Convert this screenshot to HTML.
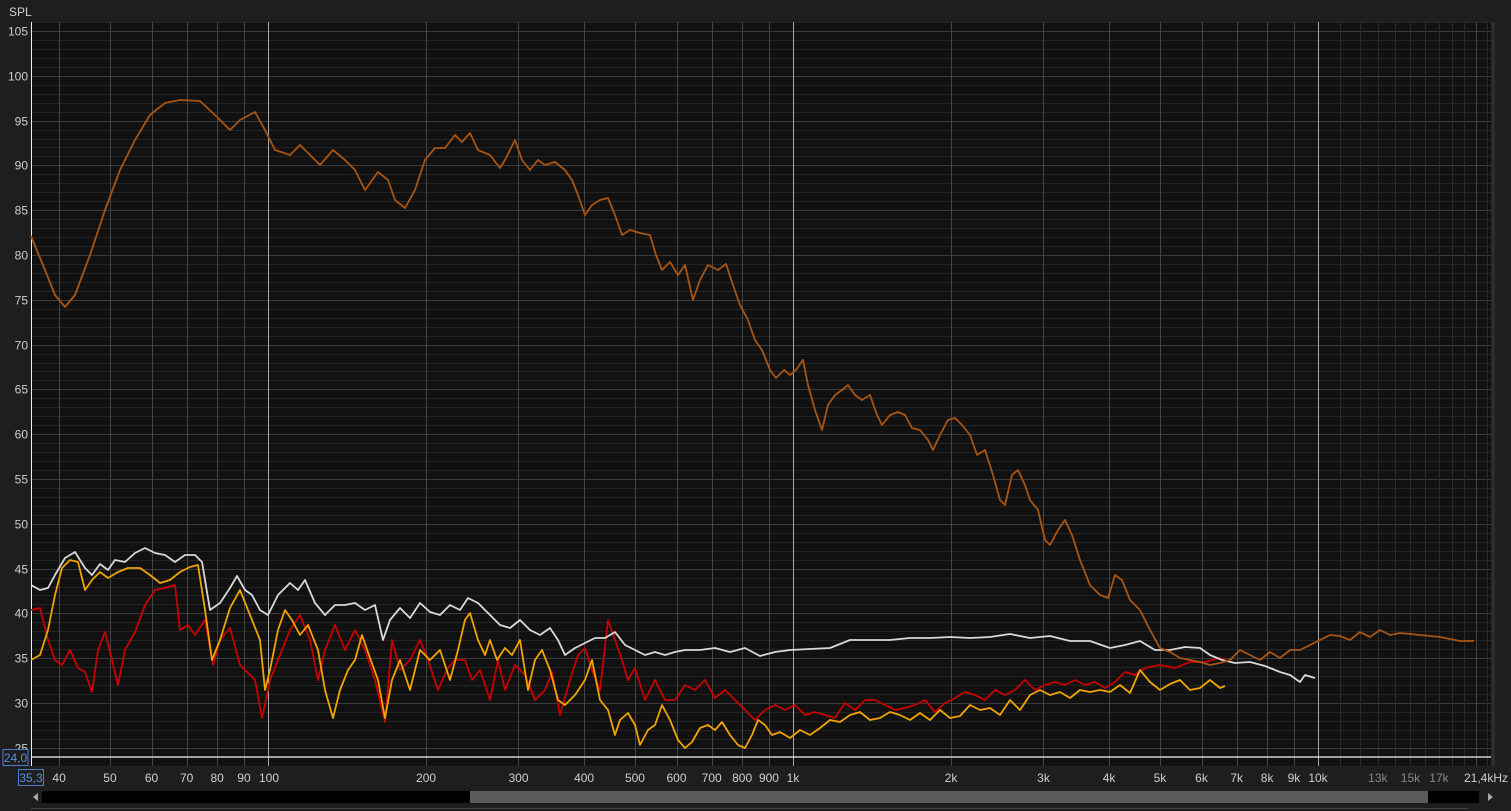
<!DOCTYPE html>
<html><head><meta charset="utf-8"><style>
html,body{margin:0;padding:0;background:#1e1e1e;width:1511px;height:811px;overflow:hidden;font-family:"Liberation Sans",sans-serif}
svg{position:absolute;left:0;top:0}
</style></head><body>
<svg id="s" width="1511" height="811" xmlns="http://www.w3.org/2000/svg">
<rect x="0" y="0" width="1511" height="811" fill="#1e1e1e"/>
<text x="9" y="16" fill="#d0d0d0" font-size="12">SPL</text>
<rect x="31" y="22" width="1460" height="744" fill="#111111"/>
<g id="grid"></g>
<g id="labels" font-size="12" fill="#cfcfcf"></g>
<line x1="31" y1="757" x2="1491" y2="757" stroke="#f0f0f0" stroke-width="1.2"/>
<line x1="31.5" y1="22" x2="31.5" y2="766" stroke="#f0f0f0" stroke-width="1"/>
<g fill="none" stroke-width="1.8" stroke-linejoin="round">
<polyline id="red" stroke="#c80000" points="31,610 40,608 48,640 55,660 62,665 70,650 78,668 85,672 92,692 98,650 105,632 112,660 118,685 125,650 135,632 145,605 155,590 165,588 175,585 180,630 188,625 195,635 205,620 213,665 220,640 230,628 240,665 255,680 262,718 270,680 280,655 290,630 300,615 310,640 318,680 325,650 335,625 345,650 355,630 365,650 375,680 385,722 392,640 400,670 410,660 420,640 428,660 438,690 448,668 455,660 465,660 472,680 480,670 490,700 498,660 505,690 515,665 525,675 535,700 545,690 552,672 560,715 570,680 578,655 585,648 592,670 600,690 608,620 615,640 622,660 628,680 635,668 645,700 655,680 665,700 675,700 685,685 695,690 705,680 715,698 725,690 735,700 745,710 755,720 765,710 775,705 785,710 795,705 805,715 815,712 825,715 835,718 845,703 855,710 865,700 875,700 885,705 895,710 905,708 915,705 925,700 935,712 945,703 955,698 965,692 975,695 985,700 995,690 1005,695 1015,690 1025,680 1035,690 1045,685 1055,682 1065,685 1075,680 1085,685 1095,682 1105,688 1115,682 1125,672 1135,675 1145,668 1160,665 1175,668 1190,662 1205,662 1220,658 1225,660"/>
<polyline stroke="#f0a400" points="31,660 40,655 48,630 55,595 62,568 70,560 78,562 85,590 92,580 100,572 108,578 118,572 128,568 140,568 150,575 160,583 170,580 180,572 190,567 198,565 205,610 212,660 220,640 230,608 240,590 250,615 260,640 265,690 270,670 278,630 285,610 292,620 300,635 308,625 318,650 325,690 333,718 340,690 348,670 355,660 362,635 370,658 378,680 385,718 392,680 400,660 410,690 420,650 430,660 440,650 450,680 458,650 465,620 470,613 478,640 485,655 490,640 497,660 505,648 512,655 520,640 528,690 535,660 542,650 550,670 558,700 565,705 575,695 585,680 592,660 600,700 608,710 615,735 620,720 628,713 635,725 640,745 648,730 655,725 662,705 670,720 678,740 685,748 692,742 700,728 708,725 715,730 722,722 730,735 738,745 745,748 752,735 758,720 765,725 772,735 780,732 790,738 800,730 810,735 820,728 830,720 840,722 850,715 860,712 870,720 880,718 890,712 900,715 910,720 920,713 930,720 940,710 950,718 960,716 970,705 980,710 990,708 1000,715 1010,700 1020,710 1030,695 1040,690 1050,695 1060,692 1070,698 1080,690 1090,692 1100,690 1110,692 1120,685 1130,693 1140,670 1150,682 1160,690 1170,684 1180,680 1190,690 1200,688 1210,680 1220,688 1225,686"/>
<polyline stroke="#d8d8d8" points="31,585 40,590 48,588 55,575 65,558 75,552 85,568 92,575 100,564 108,570 115,560 125,562 135,553 145,548 155,553 165,555 175,562 185,555 195,555 202,562 210,610 220,603 230,588 237,576 245,590 252,595 260,610 268,615 278,595 290,583 298,590 305,580 315,603 325,615 335,605 345,605 355,603 365,610 375,605 383,640 390,620 400,608 410,618 420,603 430,612 440,615 450,605 460,610 468,598 478,603 490,615 500,625 510,628 520,620 530,630 540,635 550,628 558,640 565,655 575,648 585,643 595,638 605,638 615,632 625,645 635,650 645,655 655,652 665,655 675,652 685,650 700,650 715,648 730,652 745,648 760,656 775,652 790,650 810,649 830,648 850,640 870,640 890,640 910,638 930,638 950,637 970,638 990,637 1010,634 1030,638 1050,636 1070,641 1090,641 1110,648 1125,645 1140,641 1155,650 1170,650 1185,647 1200,648 1210,655 1222,660 1235,663 1250,662 1265,666 1280,672 1290,675 1300,682 1305,675 1315,678"/>
<polyline stroke="#a85513" points="31,236 45,270 55,295 65,307 75,295 90,255 105,210 120,170 135,140 150,115 165,103 180,100 200,101 215,115 230,130 240,120 255,112 265,130 275,150 290,155 300,145 310,155 320,165 333,150 345,160 355,170 365,190 378,172 388,180 395,200 405,208 415,190 425,160 435,148 445,148 455,135 462,142 470,133 478,150 490,155 500,168 505,160 515,140 522,160 530,170 538,160 545,165 555,162 565,170 572,180 578,195 585,215 592,205 600,200 608,198 615,215 622,235 630,230 640,233 650,235 656,255 662,270 670,262 678,275 685,265 693,300 700,280 708,265 718,270 726,264 733,285 740,305 748,320 755,340 762,350 770,370 776,378 784,370 790,375 796,370 803,360 808,385 815,410 822,430 828,405 835,395 842,390 848,385 855,395 862,400 870,395 877,415 882,425 890,415 898,412 905,415 912,428 920,430 928,440 933,450 940,435 948,420 955,418 962,425 970,435 977,455 985,450 993,475 1000,500 1005,505 1012,475 1018,470 1025,485 1030,500 1038,510 1045,540 1050,545 1058,530 1065,520 1072,535 1080,560 1090,585 1100,595 1108,598 1115,575 1122,580 1130,600 1140,610 1150,630 1160,648 1170,652 1180,658 1190,660 1200,662 1210,665 1220,663 1230,660 1240,650 1250,655 1260,660 1270,652 1280,658 1290,650 1300,650 1310,645 1320,640 1330,635 1340,636 1350,640 1360,632 1370,637 1380,630 1390,635 1400,633 1420,635 1440,637 1460,641 1474,641"/>
</g>
<rect x="1491" y="22" width="4" height="744" fill="#2c2c2c"/>
<rect x="3" y="749.5" width="25" height="16" fill="#1e1e1e" stroke="#4a7fd0"/>
<text x="15.5" y="762" fill="#5a90e0" font-size="12" text-anchor="middle">24,0</text>
<rect x="18.5" y="769.5" width="25" height="16" fill="#1e1e1e" stroke="#4a7fd0"/>
<text x="31" y="782" fill="#5a90e0" font-size="12" text-anchor="middle">35,3</text>
<rect x="42" y="791" width="1437" height="12" fill="#000"/>
<rect x="470" y="791" width="958" height="12" fill="#5a5a5a"/>
<polygon points="33,797 38,793 38,801" fill="#aaa"/>
<polygon points="1488,793 1493,797 1488,801" fill="#aaa"/>
<line x1="31" y1="808.5" x2="1468" y2="808.5" stroke="#444"/>
</svg>
<script>
var g=document.getElementById('grid'),L=document.getElementById('labels'),ns='http://www.w3.org/2000/svg';
function ln(x1,y1,x2,y2,c){var e=document.createElementNS(ns,'line');e.setAttribute('x1',x1);e.setAttribute('y1',y1);e.setAttribute('x2',x2);e.setAttribute('y2',y2);e.setAttribute('stroke',c);e.setAttribute('stroke-width',1);g.appendChild(e);}
function tx(x,y,s,a,c){var e=document.createElementNS(ns,'text');e.setAttribute('x',x);e.setAttribute('y',y);e.setAttribute('text-anchor',a);if(c)e.setAttribute('fill',c);e.textContent=s;L.appendChild(e);}
function Y(d){return 31+(105-d)*8.96;}
function X(f){return 268+525*Math.log10(f/100);}
for(var d=23;d<=106;d++){var y=Math.round(Y(d))+0.5;ln(31,y,1491,y,d%5==0?'#3a3a3a':'#242424');if(d%5==0&&d>=25)tx(28,y+4,''+d,'end');}
var fs=[40,50,60,70,80,90,100,200,300,400,500,600,700,800,900,1000,2000,3000,4000,5000,6000,7000,8000,9000,10000];
for(var f=11000;f<21400;f+=1000)fs.push(f);
fs.forEach(function(f){var x=Math.round(X(f))+0.5;var c=(f==100||f==1000||f==10000)?'#a8a8a8':(f>10000?(f==20000?'#444':'#2a2a2a'):'#444');ln(x,22,x,766,c);});
var lab=[[40,'40'],[50,'50'],[60,'60'],[70,'70'],[80,'80'],[90,'90'],[100,'100'],[200,'200'],[300,'300'],[400,'400'],[500,'500'],[600,'600'],[700,'700'],[800,'800'],[900,'900'],[1000,'1k'],[2000,'2k'],[3000,'3k'],[4000,'4k'],[5000,'5k'],[6000,'6k'],[7000,'7k'],[8000,'8k'],[9000,'9k'],[10000,'10k']];
lab.forEach(function(a){tx(X(a[0])+ (a[0]==100?1:0),782,a[1],'middle');});
[[13000,'13k'],[15000,'15k'],[17000,'17k']].forEach(function(a){tx(X(a[0]),782,a[1],'middle','#888');});
tx(1508,782,'21,4kHz','end');
</script>
</body></html>
